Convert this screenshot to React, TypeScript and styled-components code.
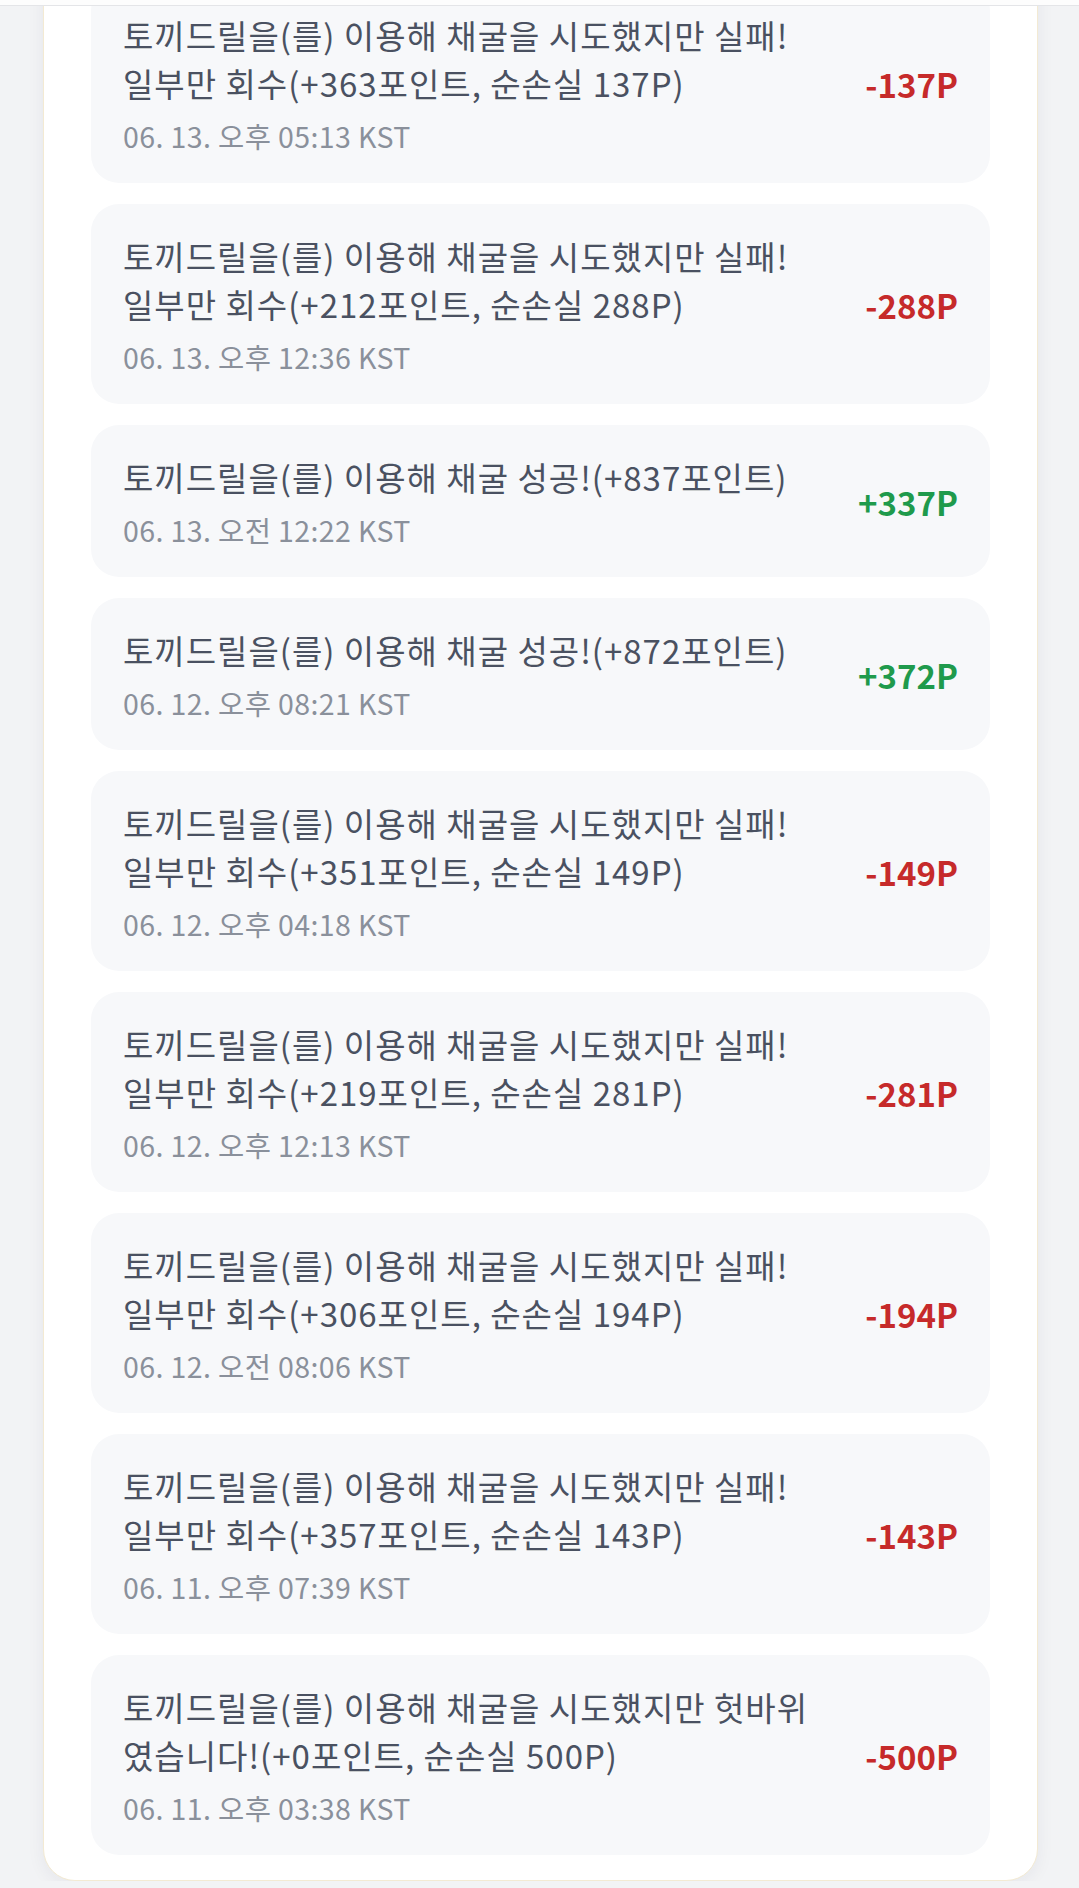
import React from "react";
import styled, { createGlobalStyle } from "styled-components";

const GlobalStyle = createGlobalStyle`
  html, body {
    margin: 0;
    padding: 0;
    background: #f2f3f5;
  }
  body {
    font-family: "Noto Sans CJK KR", "Noto Sans", sans-serif;
    -webkit-font-smoothing: antialiased;
  }
  * { box-sizing: border-box; }
`;

const TopBar = styled.div`
  position: fixed;
  top: 0;
  left: 0;
  right: 0;
  height: 6px;
  background: #fdfdfd;
  border-bottom: 1px solid #e4e5e8;
  z-index: 10;
`;

const Page = styled.div`
  display: flex;
  justify-content: center;
  padding: 0 41px 0 43px;
  overflow: hidden;
`;

const Panel = styled.section`
  width: 995px;
  margin-top: -66px;
  padding: 48px 47px 25px;
  background: #ffffff;
  border: 1px solid #f3ead3;
  border-radius: 32px;
  box-shadow: 0 4px 18px rgba(40, 40, 60, 0.06);
`;

const List = styled.ul`
  list-style: none;
  margin: 0;
  padding: 0;
  display: flex;
  flex-direction: column;
  gap: 21px;
`;

const Item = styled.li`
  display: flex;
  align-items: center;
  padding: 28px 32px 27px 32px;
  background: #f7f8fa;
  border-radius: 28px;
`;

const Body = styled.div`
  flex: 1;
  min-width: 0;
  display: flex;
  flex-direction: column;
`;

const Message = styled.p`
  margin: 0;
  font-size: 33px;
  line-height: 48px;
  letter-spacing: 1px;
  color: #4a5161;
  font-weight: 400;
`;

const Time = styled.span`
  margin-top: 9px;
  font-size: 28.5px;
  line-height: 40px;
  letter-spacing: 0.4px;
  color: #8a909b;
`;

const Amount = styled.span<{ $positive: boolean }>`
  flex-shrink: 0;
  margin-left: 48px;
  font-size: 33px;
  line-height: 48px;
  font-weight: 700;
  color: ${(p) => (p.$positive ? "#1f9a4c" : "#c62a2a")};
`;

type Entry = { text: string; time: string; amount: number };

const fail = (got: number, loss: number) =>
  `토끼드릴을(를) 이용해 채굴을 시도했지만 실패! 일부만 회수(+${got}포인트, 순손실 ${loss}P)`;
const ok = (got: number) => `토끼드릴을(를) 이용해 채굴 성공!(+${got}포인트)`;

const entries: Entry[] = [
  { text: fail(363, 137), time: "06. 13. 오후 05:13 KST", amount: -137 },
  { text: fail(212, 288), time: "06. 13. 오후 12:36 KST", amount: -288 },
  { text: ok(837), time: "06. 13. 오전 12:22 KST", amount: 337 },
  { text: ok(872), time: "06. 12. 오후 08:21 KST", amount: 372 },
  { text: fail(351, 149), time: "06. 12. 오후 04:18 KST", amount: -149 },
  { text: fail(219, 281), time: "06. 12. 오후 12:13 KST", amount: -281 },
  { text: fail(306, 194), time: "06. 12. 오전 08:06 KST", amount: -194 },
  { text: fail(357, 143), time: "06. 11. 오후 07:39 KST", amount: -143 },
  {
    text: "토끼드릴을(를) 이용해 채굴을 시도했지만 헛바위였습니다!(+0포인트, 순손실 500P)",
    time: "06. 11. 오후 03:38 KST",
    amount: -500,
  },
];

export default function App() {
  return (
    <>
      <GlobalStyle />
      <TopBar />
      <Page>
        <Panel>
          <List>
            {entries.map((e, i) => (
              <Item key={i}>
                <Body>
                  <Message>{e.text}</Message>
                  <Time>{e.time}</Time>
                </Body>
                <Amount $positive={e.amount > 0}>
                  {e.amount > 0 ? `+${e.amount}P` : `${e.amount}P`}
                </Amount>
              </Item>
            ))}
          </List>
        </Panel>
      </Page>
    </>
  );
}
